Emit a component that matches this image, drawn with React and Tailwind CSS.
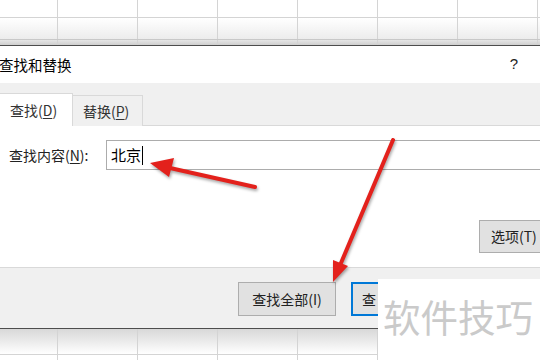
import React from "react";

const FONT = { fontFamily: '"Noto Sans CJK SC", "Noto Sans", sans-serif' };
const COLS = [0, 1, 2, 3, 4, 5, 6];

function GridRow({ className = "" }) {
  return (
    <div className={`flex ${className}`}>
      <div className="w-[58px] shrink-0 border-r border-[#d4d4d4]" />
      {COLS.map((c) => (
        <div key={c} className="w-[80px] shrink-0 border-r border-[#d4d4d4]" />
      ))}
    </div>
  );
}

function Arrows() {
  return (
    <svg
      className="absolute inset-0 pointer-events-none drop-shadow-[1px_2px_1.5px_rgba(0,0,0,0.35)]"
      width="540"
      height="360"
      viewBox="0 0 540 360"
    >
      {/* arrow pointing at the search text */}
      <line x1="255" y1="187" x2="170" y2="168" stroke="#e3211c" strokeWidth="4" strokeLinecap="round" />
      <polygon points="150,163 174,158 169,177" fill="#e3211c" />
      {/* arrow pointing at find-all */}
      <line x1="393" y1="140" x2="341" y2="263" stroke="#e3211c" strokeWidth="4" strokeLinecap="round" />
      <polygon points="333,282 348,266 333,260" fill="#e3211c" />
    </svg>
  );
}

export default function App() {
  return (
    <div className="relative w-[540px] h-[360px] overflow-hidden bg-white text-[#1a1a1a]" style={FONT}>
      {/* sheet behind, top */}
      <div className="h-[45px] flex flex-col">
        <GridRow className="h-[18px] border-b border-[#d4d4d4]" />
        <GridRow className="h-[22px] bg-gradient-to-b from-white to-[#ececec] border-b border-[#c8c8c8]" />
        <GridRow className="h-[5px] bg-gradient-to-b from-[#e6e6e6] to-[#cfcfcf]" />
      </div>

      {/* dialog */}
      <div className="h-[284px] flex flex-col border-y border-[#4d4d4d] bg-[#f0f0f0]">
        <div className="h-[37px] bg-white flex items-center justify-between pr-[22px]">
          <span className="text-[14.5px] -ml-[1px] text-black">查找和替换</span>
          <span className="text-[15px] text-[#222]" style={{ fontFamily: '"Liberation Sans", sans-serif' }}>?</span>
        </div>

        <div className="pt-[11px] flex flex-col flex-1">
          <div className="flex items-end h-[32px] relative z-10 -mb-px">
            <div className="w-[74px] h-[33px] -ml-px bg-white border border-b-0 border-[#d9d9d9] flex items-center pl-[10px] text-[14px] text-[#333]">
              查找(<span className="underline underline-offset-2">D</span>)
            </div>
            <div className="w-[70px] h-[31px] bg-[#f0f0f0] border border-l-0 border-b-0 border-[#d9d9d9] flex items-center pl-[10px] text-[14px] text-[#333]">
              替换(<span className="underline underline-offset-2">P</span>)
            </div>
          </div>

          <div className="h-[143px] bg-white border-y border-[#d9d9d9] flex flex-col pt-[14px]">
            <div className="flex items-center h-[30px]">
              <span className="pl-[9px] w-[106px] text-[14px] text-[#222]">
                查找内容(<span className="underline underline-offset-2">N</span>):
              </span>
              <div className="flex-1 h-[30px] border border-r-0 border-[#acacac] flex items-center pl-[4px] text-[15px] text-black">
                北京<span className="w-px h-[19px] bg-black ml-[1px]" />
              </div>
            </div>
            <div className="flex justify-end mt-[50px]">
              <div className="w-[75px] h-[33px] -mr-[14px] bg-[#e1e1e1] border border-[#adadad] flex items-center pl-[11px] text-[14px] text-[#222]">
                选项(T)
              </div>
            </div>
          </div>

          <div className="flex-1 flex items-start pt-[14px] pl-[238px] gap-[15px]">
            <div className="w-[98px] h-[34px] bg-[#e1e1e1] border border-[#adadad] flex items-center justify-center text-[14px] text-[#222]">
              查找全部(I)
            </div>
            {/* find-next button, its right part is hidden behind the watermark */}
            <div className="w-[27px] h-[34px] bg-[#e1e1e1] border-2 border-r-0 border-[#0078d7] flex items-center pl-[9px] overflow-hidden">
              <span className="text-[14px] text-[#222] whitespace-nowrap">查</span>
            </div>
          </div>
        </div>
      </div>

      {/* sheet behind, bottom */}
      <div className="flex flex-col">
        <GridRow className="h-[26px] bg-gradient-to-b from-[#d8d8d8] to-white border-b border-[#d4d4d4]" />
        <GridRow className="h-[10px]" />
      </div>

      <Arrows />

      {/* watermark */}
      <div className="absolute left-[378px] top-[279px] w-[162px] h-[81px] bg-white flex items-center pl-[5px] pb-[8px]">
        <span className="text-[37.5px] leading-none text-[#cacaca] whitespace-nowrap">软件技巧</span>
      </div>
    </div>
  );
}
